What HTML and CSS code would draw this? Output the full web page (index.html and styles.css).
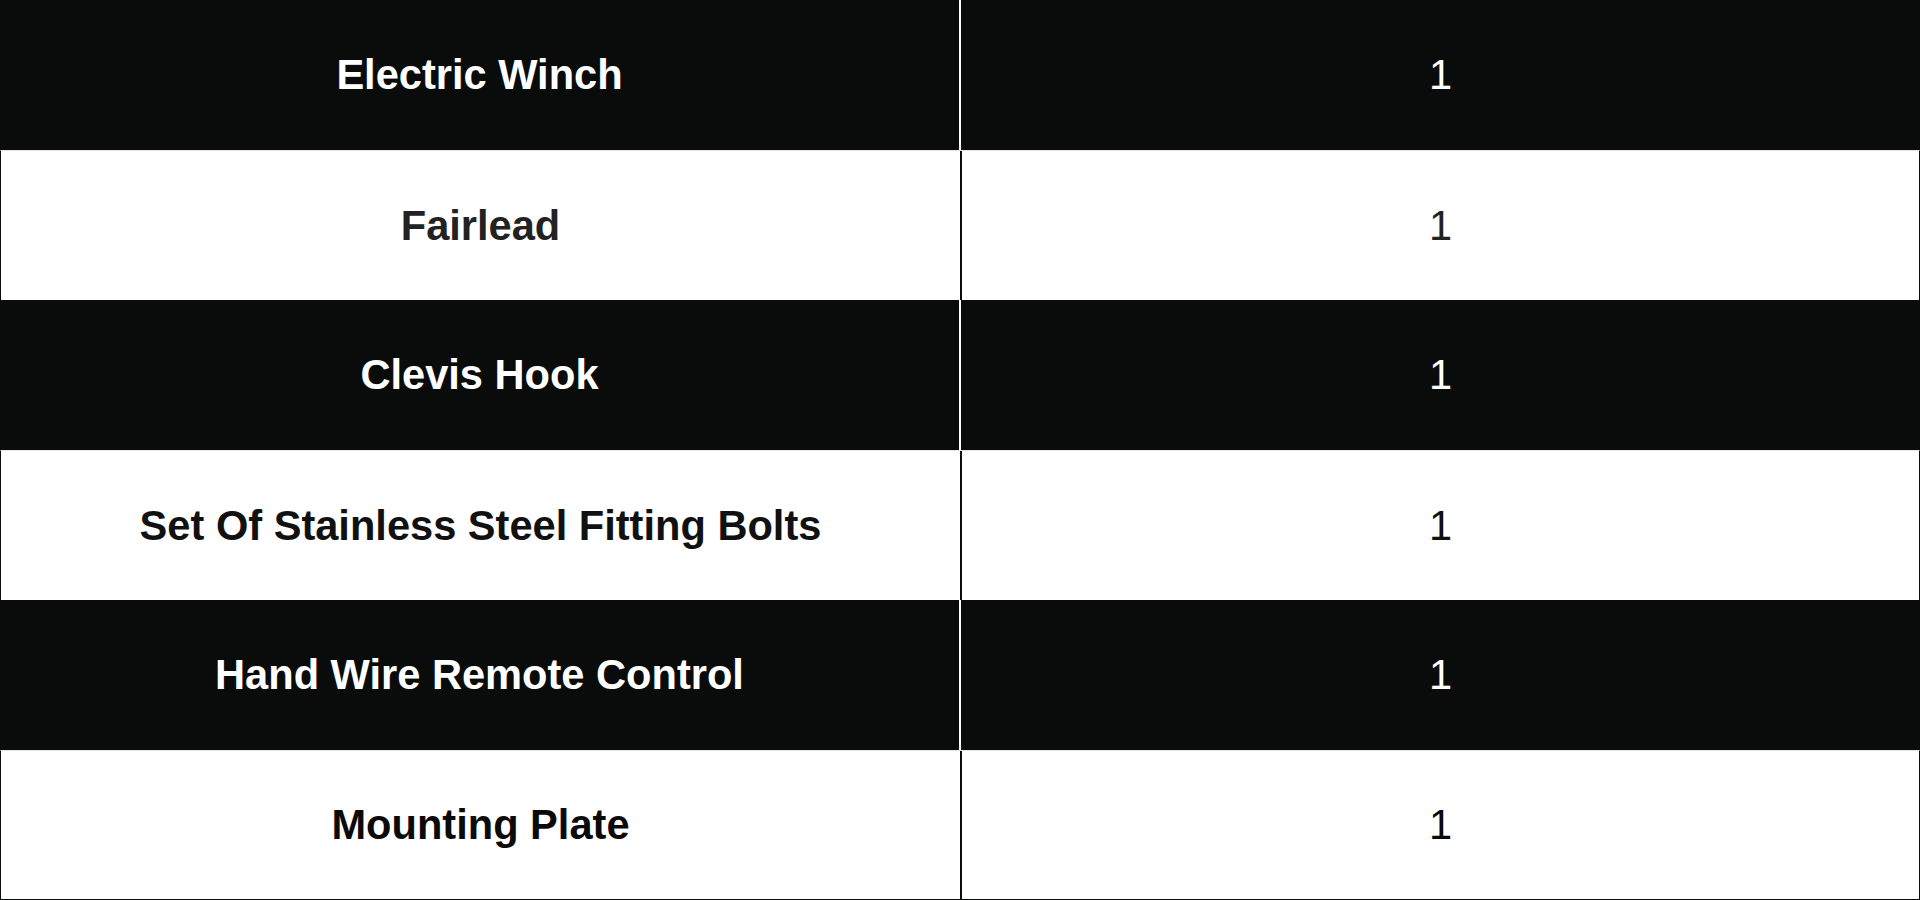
FILE: index.html
```html
<!DOCTYPE html>
<html lang="en">
<head>
<meta charset="utf-8">
<title>Package Contents</title>
<link rel="stylesheet" href="styles.css">
</head>
<body>
<div class="table">
  <div class="row dark"><div class="cell name">Electric Winch</div><div class="cell qty">1</div></div>
  <div class="row light grey"><div class="cell name">Fairlead</div><div class="cell qty">1</div></div>
  <div class="row dark"><div class="cell name">Clevis Hook</div><div class="cell qty">1</div></div>
  <div class="row light"><div class="cell name">Set Of Stainless Steel Fitting Bolts</div><div class="cell qty">1</div></div>
  <div class="row dark"><div class="cell name">Hand Wire Remote Control</div><div class="cell qty">1</div></div>
  <div class="row light last"><div class="cell name">Mounting Plate</div><div class="cell qty">1</div></div>
</div>
</body>
</html>
```
FILE: styles.css
```css
html, body {
  margin: 0;
  padding: 0;
  background: #ffffff;
}
body {
  font-family: "Liberation Sans", Arial, sans-serif;
  width: 1920px;
  height: 900px;
  overflow: hidden;
}
.table {
  display: flex;
  flex-direction: column;
  width: 1920px;
}
.row {
  display: grid;
  grid-template-columns: 961px 1fr;
  height: 150px;
  box-sizing: border-box;
}
.cell {
  display: flex;
  align-items: center;
  justify-content: center;
  font-size: 41.6px;
  line-height: 1;
}
.name {
  font-weight: 700;
  border-right: 2px solid;
}
.qty {
  font-weight: 400;
}
.dark {
  background: #0a0c0b;
  color: #ffffff;
}
.dark .name {
  border-right-color: #ffffff;
}
.light {
  background: #ffffff;
  color: #111111;
  border-left: 1px solid #0a0c0b;
  border-right: 1px solid #0a0c0b;
  border-top: 1px solid #e6e6e6;
}
.light .name {
  border-right-color: #0a0c0b;
}
.light.grey {
  color: #222222;
}
.light.last {
  color: #0a0a0a;
  border-bottom: 1px solid #0a0c0b;
}
```
